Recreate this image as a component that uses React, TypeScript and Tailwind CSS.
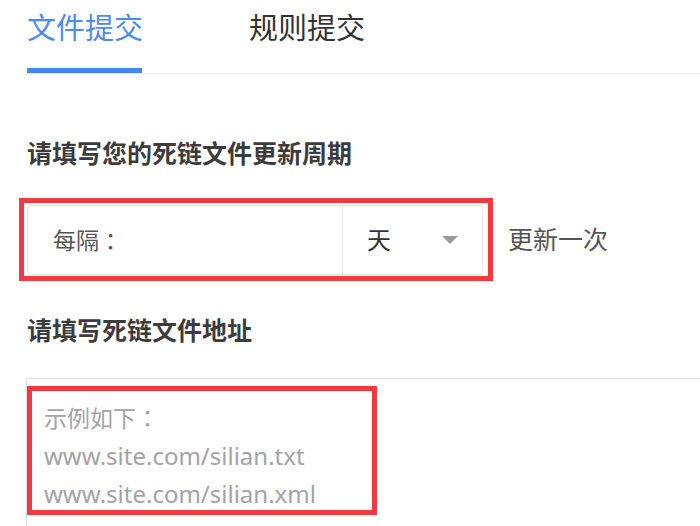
export default function App() {
  const font = { fontFamily: '"Noto Sans", "Noto Sans CJK SC", sans-serif' };
  // full-width colon sits centred in its cell, as in the original
  const colon = { fontFamily: '"Noto Sans CJK TC", sans-serif' };

  return (
    <div className="w-[700px] h-[526px] overflow-hidden bg-white" style={font}>
      {/* tabs */}
      <div className="ml-[27px] flex border-b border-[#e8e8e8]">
        <div className="w-[115px] whitespace-nowrap pt-[13px] pb-[26px] border-b-[5px] border-[#4285f4] text-[29px] leading-[29px] text-[#4d8af5]">
          文件提交
        </div>
        <div className="ml-[107px] whitespace-nowrap pt-[13px] pb-[26px] text-[29px] leading-[29px] text-[#333]">
          规则提交
        </div>
      </div>

      <div className="ml-[27px] mt-[67px] text-[25px] leading-[25px] font-bold text-[#3c3c3c]">
        请填写您的死链文件更新周期
      </div>

      <div className="mt-[32px] flex items-center">
        <div className="ml-[19px] w-[474px] h-[83px] border-[5px] border-[#f2393f] pl-[3px] pt-[2px]">
          <div className="flex w-[456px] h-[70px] border border-[#e3e3e3] rounded-sm">
            <div className="w-[314px] flex items-center pl-[25px] text-[23px] text-[#555]">
              每隔<span style={colon}>：</span>
            </div>
            <div className="flex-1 flex items-center justify-between border-l border-[#e3e3e3] pl-[24px] pr-[24px] text-[24px] text-[#333]">
              <span>天</span>
              <svg width="16" height="9" viewBox="0 0 16 9">
                <path d="M0 0 L16 0 L8 8 Z" fill="#9a9a9a" />
              </svg>
            </div>
          </div>
        </div>
        <div className="ml-[15px] text-[25px] text-[#555]">更新一次</div>
      </div>

      <div className="ml-[27px] mt-[37px] text-[25px] leading-[25px] font-bold text-[#3c3c3c]">
        请填写死链文件地址
      </div>

      <div className="ml-[26px] mt-[35px] h-[200px] border-t border-l border-[#dedede] rounded-tl">
        <div className="mt-[7px] w-[350px] h-[129px] border-[5px] border-[#f2393f] pl-[12px] pt-[7px] text-[#a3a3a3] leading-[38px]">
          <div className="text-[23px]">
            示例如下<span style={colon}>：</span>
          </div>
          <div className="text-[24px]">www.site.com/silian.txt</div>
          <div className="text-[24px]">www.site.com/silian.xml</div>
        </div>
      </div>
    </div>
  );
}
